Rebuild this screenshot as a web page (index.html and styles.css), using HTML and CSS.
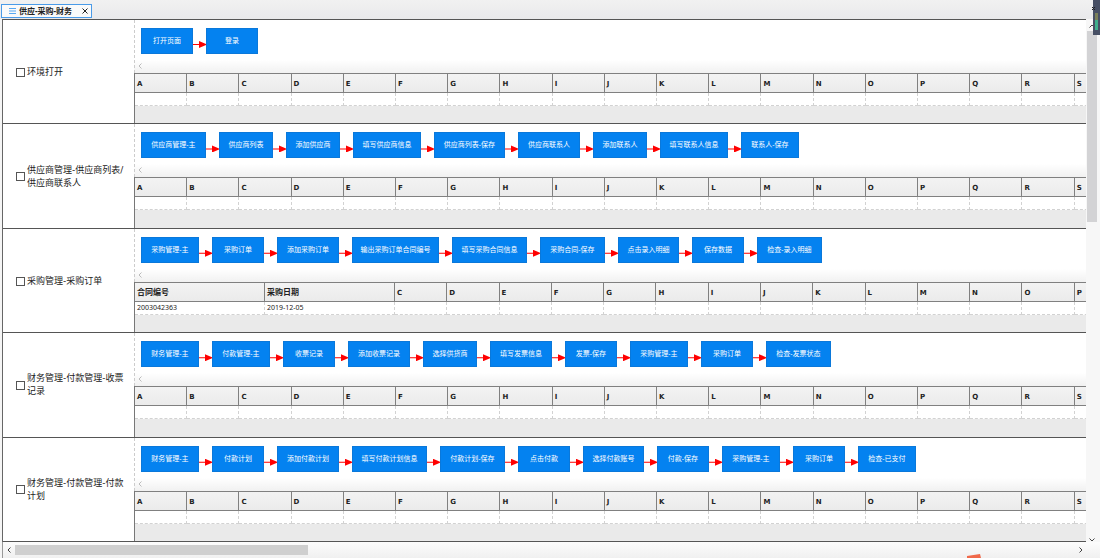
FILE: index.html
```html
<!DOCTYPE html>
<html lang="zh-CN">
<head>
<meta charset="utf-8">
<title>供应-采购-财务</title>
<link rel="stylesheet" href="styles.css">
</head>
<body>
<header class="tabbar">
  <div class="tab">
    <svg class="tab-icon" viewBox="0 0 7 6"><path d="M0 .5h7M0 3h7M0 5.5h7"/></svg>
    <span>供应-采购-财务</span>
    <button class="tab-close" type="button" aria-label="关闭"><svg viewBox="0 0 6 6"><path d="M.5 .5l5 5M5.5 .5l-5 5"/></svg></button>
  </div>
</header>
<div class="workspace">
  <main class="rows">
    <section class="row">
      <div class="name"><input type="checkbox" id="c1"><label for="c1">环境打开</label></div>
      <div class="detail">
        <div class="flow">
          <ol class="steps"><li><span class="node w52">打开页面</span></li><li><span class="node w52">登录</span></li></ol>
          <svg class="chevron hint" viewBox="0 0 4 6"><path d="M3.5 .5L1 3l2.5 2.5"/></svg>
        </div>
        <table class="sheet">
          <thead><tr><th>A</th><th>B</th><th>C</th><th>D</th><th>E</th><th>F</th><th>G</th><th>H</th><th>I</th><th>J</th><th>K</th><th>L</th><th>M</th><th>N</th><th>O</th><th>P</th><th>Q</th><th>R</th><th>S</th></tr></thead>
          <tbody><tr><td></td><td></td><td></td><td></td><td></td><td></td><td></td><td></td><td></td><td></td><td></td><td></td><td></td><td></td><td></td><td></td><td></td><td></td><td></td></tr></tbody>
        </table>
      </div>
    </section>
    <section class="row">
      <div class="name"><input type="checkbox" id="c2"><label for="c2">供应商管理-供应商列表/供应商联系人</label></div>
      <div class="detail">
        <div class="flow">
          <ol class="steps"><li><span class="node w65">供应商管理-主</span></li><li><span class="node w54">供应商列表</span></li><li><span class="node w54">添加供应商</span></li><li><span class="node w68">填写供应商信息</span></li><li><span class="node w71">供应商列表-保存</span></li><li><span class="node w62">供应商联系人</span></li><li><span class="node w54">添加联系人</span></li><li><span class="node w68">填写联系人信息</span></li><li><span class="node w58">联系人-保存</span></li></ol>
          <svg class="chevron hint" viewBox="0 0 4 6"><path d="M3.5 .5L1 3l2.5 2.5"/></svg>
        </div>
        <table class="sheet">
          <thead><tr><th>A</th><th>B</th><th>C</th><th>D</th><th>E</th><th>F</th><th>G</th><th>H</th><th>I</th><th>J</th><th>K</th><th>L</th><th>M</th><th>N</th><th>O</th><th>P</th><th>Q</th><th>R</th><th>S</th></tr></thead>
          <tbody><tr><td></td><td></td><td></td><td></td><td></td><td></td><td></td><td></td><td></td><td></td><td></td><td></td><td></td><td></td><td></td><td></td><td></td><td></td><td></td></tr></tbody>
        </table>
      </div>
    </section>
    <section class="row">
      <div class="name"><input type="checkbox" id="c3"><label for="c3">采购管理-采购订单</label></div>
      <div class="detail">
        <div class="flow">
          <ol class="steps"><li><span class="node w58">采购管理-主</span></li><li><span class="node w52">采购订单</span></li><li><span class="node w62">添加采购订单</span></li><li><span class="node w87">输出采购订单合同编号</span></li><li><span class="node w75">填写采购合同信息</span></li><li><span class="node w65">采购合同-保存</span></li><li><span class="node w61">点击录入明细</span></li><li><span class="node w52">保存数据</span></li><li><span class="node w65">检查-录入明细</span></li></ol>
          <svg class="chevron hint" viewBox="0 0 4 6"><path d="M3.5 .5L1 3l2.5 2.5"/></svg>
        </div>
        <table class="sheet">
          <thead><tr><th class="field">合同编号</th><th class="field">采购日期</th><th>C</th><th>D</th><th>E</th><th>F</th><th>G</th><th>H</th><th>I</th><th>J</th><th>K</th><th>L</th><th>M</th><th>N</th><th>O</th><th>P</th></tr></thead>
          <tbody><tr><td>2003042363</td><td>2019-12-05</td><td></td><td></td><td></td><td></td><td></td><td></td><td></td><td></td><td></td><td></td><td></td><td></td><td></td><td></td></tr></tbody>
        </table>
      </div>
    </section>
    <section class="row">
      <div class="name"><input type="checkbox" id="c4"><label for="c4">财务管理-付款管理-收票记录</label></div>
      <div class="detail">
        <div class="flow">
          <ol class="steps"><li><span class="node w58">财务管理-主</span></li><li><span class="node w58">付款管理-主</span></li><li><span class="node w52">收票记录</span></li><li><span class="node w62">添加收票记录</span></li><li><span class="node w54">选择供货商</span></li><li><span class="node w62">填写发票信息</span></li><li><span class="node w52">发票-保存</span></li><li><span class="node w58">采购管理-主</span></li><li><span class="node w52">采购订单</span></li><li><span class="node w65">检查-发票状态</span></li></ol>
          <svg class="chevron hint" viewBox="0 0 4 6"><path d="M3.5 .5L1 3l2.5 2.5"/></svg>
        </div>
        <table class="sheet">
          <thead><tr><th>A</th><th>B</th><th>C</th><th>D</th><th>E</th><th>F</th><th>G</th><th>H</th><th>I</th><th>J</th><th>K</th><th>L</th><th>M</th><th>N</th><th>O</th><th>P</th><th>Q</th><th>R</th><th>S</th></tr></thead>
          <tbody><tr><td></td><td></td><td></td><td></td><td></td><td></td><td></td><td></td><td></td><td></td><td></td><td></td><td></td><td></td><td></td><td></td><td></td><td></td><td></td></tr></tbody>
        </table>
      </div>
    </section>
    <section class="row">
      <div class="name"><input type="checkbox" id="c5"><label for="c5">财务管理-付款管理-付款计划</label></div>
      <div class="detail">
        <div class="flow">
          <ol class="steps"><li><span class="node w58">财务管理-主</span></li><li><span class="node w52">付款计划</span></li><li><span class="node w62">添加付款计划</span></li><li><span class="node w75">填写付款计划信息</span></li><li><span class="node w65">付款计划-保存</span></li><li><span class="node w52">点击付款</span></li><li><span class="node w61">选择付款账号</span></li><li><span class="node w52">付款-保存</span></li><li><span class="node w58">采购管理-主</span></li><li><span class="node w52">采购订单</span></li><li><span class="node w58">检查-已支付</span></li></ol>
          <svg class="chevron hint" viewBox="0 0 4 6"><path d="M3.5 .5L1 3l2.5 2.5"/></svg>
        </div>
        <table class="sheet">
          <thead><tr><th>A</th><th>B</th><th>C</th><th>D</th><th>E</th><th>F</th><th>G</th><th>H</th><th>I</th><th>J</th><th>K</th><th>L</th><th>M</th><th>N</th><th>O</th><th>P</th><th>Q</th><th>R</th><th>S</th></tr></thead>
          <tbody><tr><td></td><td></td><td></td><td></td><td></td><td></td><td></td><td></td><td></td><td></td><td></td><td></td><td></td><td></td><td></td><td></td><td></td><td></td><td></td></tr></tbody>
        </table>
      </div>
    </section>
  </main>
  <div class="vscroll">
    <svg class="arrow" viewBox="0 0 6 4"><path d="M.5 3.5L3 1l2.5 2.5"/></svg>
    <div class="vthumb"></div>
    <svg class="arrow" viewBox="0 0 6 4"><path d="M.5 .5L3 3 5.5 .5"/></svg>
  </div>
</div>
<footer class="hscroll">
  <svg class="chevron" viewBox="0 0 4 6"><path d="M3.5 .5L1 3l2.5 2.5"/></svg>
  <div class="track"><div class="hthumb"></div></div>
  <svg class="chevron" viewBox="0 0 4 6"><path d="M.5 .5L3 3 .5 5.5"/></svg>
</footer>
<svg class="corner-widget" viewBox="0 0 8 35"><path fill="#474f64" d="M1 0h7v35H1z"/><path fill="#7a7f58" d="M3 13h3v7H3z"/><path fill="#3fae8c" d="M3 20h3v10H3z"/><path fill="none" stroke="#222" d="M0 7l3 3M0 10l3-3"/></svg>
<svg class="corner-mark" viewBox="0 0 14 4"><path fill="#f0694a" d="M0 2L13 0l1 4H0z"/></svg>
</body>
</html>
```

FILE: styles.css
```css
* {
  box-sizing: border-box;
}

body {
  margin: 0;
  min-height: 100vh;
  display: flex;
  flex-direction: column;
  position: relative;
  overflow: hidden;
  background: #f5f5f5;
  color: #222;
  font-family: "Noto Sans", "Noto Sans CJK SC", sans-serif;
  font-size: 7px;
}

.tabbar {
  display: flex;
  align-items: flex-end;
  height: 19px;
  padding: 0 1px 1px;
  background: linear-gradient(#f1f1f1, #e9e9eb);
}

.tab {
  display: flex;
  align-items: center;
  height: 14px;
  width: 91px;
  padding: 0 3px 0 7px;
  border: 1px solid #4a9be8;
  background: #fafafa;
  font-size: 8px;
  font-weight: 700;
  line-height: 12px;
  white-space: nowrap;
}

.tab-icon {
  width: 7px;
  height: 6px;
  margin-right: 3px;
  stroke: #58a9f2;
  fill: none;
}

.tab-close {
  display: flex;
  margin-left: auto;
  padding: 0;
  border: 0;
  background: none;
}

.tab-close svg {
  width: 6px;
  height: 6px;
  stroke: #222;
  fill: none;
}

.workspace {
  flex: 1;
  display: flex;
}

.rows {
  flex: 1;
  min-width: 0;
  display: flex;
  flex-direction: column;
  margin-left: 2px;
  border-top: 1px solid #555;
  border-left: 1px solid #666;
  background: #fff;
}

.row {
  flex: 1;
  display: flex;
  border-bottom: 1px solid #555;
}

.name {
  flex: none;
  width: 131px;
  display: flex;
  align-items: center;
  gap: 2px;
  padding: 1px 4px 0 13px;
  font-family: "DejaVu Sans", "Noto Sans CJK SC", sans-serif;
  font-size: 9px;
  line-height: 13px;
}

.name label {
  flex: 1;
  word-break: break-all;
}

.name input {
  appearance: none;
  flex: none;
  width: 9px;
  height: 9px;
  margin: 0;
  border: 1px solid #555;
  background: #fff;
}

.detail {
  flex: 1;
  min-width: 0;
  overflow: hidden;
  display: flex;
  flex-direction: column;
  background: #eaeaea;
}

.detail::after {
  content: "";
  flex: 1;
  border-left: 1px solid #777;
}

.flow {
  height: 53px;
  padding: 8px 0 0 6px;
  border-left: 1px dashed #ccc;
  background: linear-gradient(#fff 75%, #f1f1f1);
}

.steps {
  display: flex;
  margin: 0;
  padding: 0;
  list-style: none;
}

.steps li {
  display: flex;
}

.steps li + li::before {
  content: "";
  width: 13px;
  height: 7px;
  margin-top: 13px;
  background: #f00;
  clip-path: polygon(0 3px, 6px 3px, 6px 0, 13px 3px, 13px 4px, 6px 7px, 6px 4px, 0 4px);
}

.node {
  height: 26px;
  border: 1px solid #0a78da;
  background: #0482f0;
  color: #fff;
  line-height: 23px;
  text-align: center;
  white-space: nowrap;
}

.w52 { width: 52px; }
.w54 { width: 54px; }
.w58 { width: 58px; }
.w61 { width: 61px; }
.w62 { width: 62px; }
.w65 { width: 65px; }
.w68 { width: 68px; }
.w71 { width: 71px; }
.w75 { width: 75px; }
.w87 { width: 87px; }

.chevron {
  flex: none;
  width: 4px;
  height: 6px;
  stroke: #444;
  fill: none;
}

.hint {
  display: block;
  margin: 9px 0 0 -3px;
  stroke: #bbb;
}

.sheet {
  width: 993px;
  table-layout: fixed;
  border-spacing: 0;
  border-left: 1px solid #777;
}

.sheet th,
.sheet td {
  padding: 0 2px;
  text-align: left;
  white-space: nowrap;
}

.sheet th {
  height: 20px;
  padding-top: 2px;
  border: solid #808080;
  border-width: 1px 1px 1px 0;
  background: linear-gradient(#f3f3f3, #ebebeb);
  font-family: "DejaVu Sans", "Noto Sans CJK SC", sans-serif;
  font-weight: 700;
  line-height: 16px;
}

.sheet .field {
  width: 130px;
  font-size: 8px;
}

.sheet td {
  height: 13px;
  border: dashed #d2d2d2;
  border-width: 0 1px 1px 0;
  background: #fff;
  line-height: 12px;
}

.vscroll {
  flex: none;
  width: 14px;
  display: flex;
  flex-direction: column;
  padding: 5px 3px 0 1px;
  background: #f7f7f7;
}

.arrow {
  width: 6px;
  height: 4px;
  margin: 0 auto;
  stroke: #444;
  fill: none;
}

.vthumb {
  height: 191px;
  margin: 3px 0 auto;
  background: #d3d3d5;
}

.hscroll {
  display: flex;
  align-items: center;
  gap: 4px;
  height: 16px;
  margin-left: 2px;
  padding: 0 17px 0 4px;
  border-left: 1px solid #999;
  background: linear-gradient(#fcfcfc, #f0f0f0);
}

.track {
  flex: 1;
}

.hthumb {
  width: 293px;
  height: 10px;
  background: #cfcfcf;
}

.corner-widget {
  position: absolute;
  top: 0;
  right: 0;
  width: 8px;
  height: 35px;
}

.corner-mark {
  position: absolute;
  right: 119px;
  bottom: 0;
  width: 14px;
  height: 4px;
}
```
